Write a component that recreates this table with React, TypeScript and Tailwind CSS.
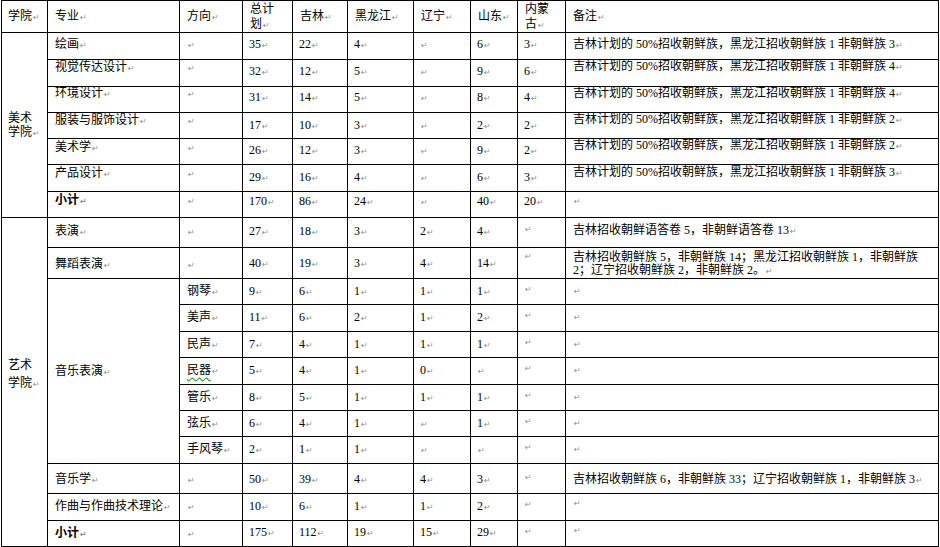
import React from "react";

type Row = {
  major?: string;
  dir?: string;
  vals: string[];
  note?: string[];
  bold?: boolean;
  wavy?: boolean;
  t: string;
  n: string;
  r: string;
  m?: string;
};

const NOTE_A = (k: string) => [`吉林计划的 50%招收朝鲜族，黑龙江招收朝鲜族 1 非朝鲜族 ${k}`];

const ART: Row[] = [
  { major: "绘画", vals: ["35", "22", "4", "", "6", "3"], note: NOTE_A("3"), t: "pt-[5px]", n: "pt-[5px]", r: "pt-[5px]" },
  { major: "视觉传达设计", vals: ["32", "12", "5", "", "9", "6"], note: NOTE_A("4"), t: "pt-px", n: "pt-[5px]", r: "pt-0" },
  { major: "环境设计", vals: ["31", "14", "5", "", "8", "4"], note: NOTE_A("4"), t: "pt-0", n: "pt-[4px]", r: "pt-0" },
  { major: "服装与服饰设计", vals: ["17", "10", "3", "", "2", "2"], note: NOTE_A("2"), t: "pt-px", n: "pt-[6px]", r: "pt-0" },
  { major: "美术学", vals: ["26", "12", "3", "", "9", "2"], note: NOTE_A("2"), t: "pt-[2px]", n: "pt-[5px]", r: "pt-0" },
  { major: "产品设计", vals: ["29", "16", "4", "", "6", "3"], note: NOTE_A("3"), t: "pt-[2px]", n: "pt-[6px]", r: "pt-px" },
  { major: "小计", bold: true, vals: ["170", "86", "24", "", "40", "20"], t: "pt-[2px]", n: "pt-[3px]", r: "pt-[2px]" },
];

const PERF: Row[] = [
  { major: "表演", vals: ["27", "18", "3", "2", "4", ""], note: ["吉林招收朝鲜语答卷 5，非朝鲜语答卷 13"], t: "pt-[7px]", n: "pt-[7px]", r: "pt-[6px]", m: "pt-[4px]" },
  {
    major: "舞蹈表演",
    vals: ["40", "19", "3", "4", "14", ""],
    note: ["吉林招收朝鲜族 5，非朝鲜族 14；黑龙江招收朝鲜族 1，非朝鲜族", "2；辽宁招收朝鲜族 2，非朝鲜族 2。"],
    t: "pt-[10px]", n: "pt-[9px]", r: "pt-[3px]", m: "pt-px",
  },
];

const MUSIC: Row[] = [
  { dir: "钢琴", vals: ["9", "6", "1", "1", "1", ""], t: "pt-[6px]", n: "pt-[6px]", r: "pt-[5px]", m: "pt-[3px]" },
  { dir: "美声", vals: ["11", "6", "2", "1", "2", ""], t: "pt-[6px]", n: "pt-[6px]", r: "pt-[5px]", m: "pt-[3px]" },
  { dir: "民声", vals: ["7", "4", "1", "1", "1", ""], t: "pt-[6px]", n: "pt-[6px]", r: "pt-[5px]", m: "pt-[3px]" },
  { dir: "民器", wavy: true, vals: ["5", "4", "1", "0", "", ""], t: "pt-[6px]", n: "pt-[6px]", r: "pt-[5px]", m: "pt-[3px]" },
  { dir: "管乐", vals: ["8", "5", "1", "1", "1", ""], t: "pt-[6px]", n: "pt-[6px]", r: "pt-[5px]", m: "pt-[3px]" },
  { dir: "弦乐", vals: ["6", "4", "1", "", "1", ""], t: "pt-[6px]", n: "pt-[6px]", r: "pt-[5px]", m: "pt-[3px]" },
  { dir: "手风琴", vals: ["2", "1", "1", "", "", ""], t: "pt-[6px]", n: "pt-[6px]", r: "pt-[5px]", m: "pt-[3px]" },
];

const TAIL: Row[] = [
  { major: "音乐学", vals: ["50", "39", "4", "4", "3", ""], note: ["吉林招收朝鲜族 6，非朝鲜族 33；辽宁招收朝鲜族 1，非朝鲜族 3"], t: "pt-[9px]", n: "pt-[9px]", r: "pt-[9px]", m: "pt-[6px]" },
  { major: "作曲与作曲技术理论", vals: ["10", "6", "1", "1", "2", ""], t: "pt-[6px]", n: "pt-[6px]", r: "pt-[2px]", m: "pt-[3px]" },
  { major: "小计", bold: true, vals: ["175", "112", "19", "15", "29", ""], t: "pt-[6px]", n: "pt-[5px]", r: "pt-[2px]", m: "pt-[3px]" },
];

function Mark() {
  return <span className="ml-px font-['DejaVu_Sans'] text-[8px] text-[#8c8c8c]">↵</span>;
}

function Cell({ className = "", children }: { className?: string; children?: React.ReactNode }) {
  return <div className={`overflow-hidden whitespace-nowrap bg-white ${className}`}>{children}</div>;
}

function DataCells({ row, withMajor }: { row: Row; withMajor: boolean }) {
  return (
    <>
      {withMajor && (
        <Cell className={`pl-[7px] ${row.t} ${row.bold ? "font-bold" : ""}`}>
          {row.major}
          <Mark />
        </Cell>
      )}
      <Cell className={`pl-[7px] ${row.t}`}>
        {row.dir && (
          <span className={row.wavy ? "underline decoration-wavy decoration-[#3a9a3a] underline-offset-[3px]" : ""}>{row.dir}</span>
        )}
        <Mark />
      </Cell>
      {row.vals.map((v, i) => (
        <Cell key={i} className={`pl-[6px] ${i === 5 && !v && row.m ? row.m : row.n}`}>
          {v}
          <Mark />
        </Cell>
      ))}
      <Cell className={`pl-[7px] ${row.r}`}>
        {row.note?.map((line, i) => (
          <div key={i}>
            {line}
            {i === (row.note?.length ?? 1) - 1 && <Mark />}
          </div>
        ))}
        {!row.note && <Mark />}
      </Cell>
    </>
  );
}

export default function App() {
  return (
    <div className="min-h-screen bg-white text-[12px] leading-[13px] text-black font-['Liberation_Serif','Noto_Sans_CJK_SC',serif]">
      <div className="ml-px grid w-max grid-cols-[45px_131px_62px_49px_54px_65px_56px_46px_47px_372px] grid-rows-[31px_26px_26px_25px_25px_25px_26px_25px_29px_30px_25px_26px_25px_26px_25px_25px_26px_29px_26px_25px] gap-px bg-black p-px">
        {/* header */}
        <Cell className="pl-[6px] pt-[9px]">学院<Mark /></Cell>
        <Cell className="pl-[7px] pt-[9px]">专业<Mark /></Cell>
        <Cell className="pl-[7px] pt-[9px]">方向<Mark /></Cell>
        <Cell className="pl-[7px] pt-px leading-[15px]">
          <div>总计</div>
          <div>划<Mark /></div>
        </Cell>
        <Cell className="pl-[7px] pt-[9px]">吉林<Mark /></Cell>
        <Cell className="pl-[7px] pt-[9px]">黑龙江<Mark /></Cell>
        <Cell className="pl-[7px] pt-[9px]">辽宁<Mark /></Cell>
        <Cell className="pl-[7px] pt-[9px]">山东<Mark /></Cell>
        <Cell className="pl-[7px] pt-px leading-[15px]">
          <div>内蒙</div>
          <div>古<Mark /></div>
        </Cell>
        <Cell className="pl-[7px] pt-[9px]">备注<Mark /></Cell>

        {/* 美术学院 */}
        {ART.map((row, i) => (
          <React.Fragment key={row.major}>
            {i === 0 && (
              <Cell className="row-span-7 pl-[6px] pt-[78px] leading-[14px]">
                <div>美术</div>
                <div>学院<Mark /></div>
              </Cell>
            )}
            <DataCells row={row} withMajor />
          </React.Fragment>
        ))}

        {/* 艺术学院 */}
        {PERF.map((row, i) => (
          <React.Fragment key={row.major}>
            {i === 0 && (
              <Cell className="row-span-12 pl-[6px] pt-[138px] leading-[18px]">
                <div>艺术</div>
                <div>学院<Mark /></div>
              </Cell>
            )}
            <DataCells row={row} withMajor />
          </React.Fragment>
        ))}

        {MUSIC.map((row, i) => (
          <React.Fragment key={row.dir}>
            {i === 0 && (
              <Cell className="row-span-7 pl-[7px] pt-[86px]">
                音乐表演<Mark />
              </Cell>
            )}
            <DataCells row={row} withMajor={false} />
          </React.Fragment>
        ))}

        {TAIL.map((row) => (
          <DataCells key={row.major + row.vals[0]} row={row} withMajor />
        ))}
      </div>
    </div>
  );
}
